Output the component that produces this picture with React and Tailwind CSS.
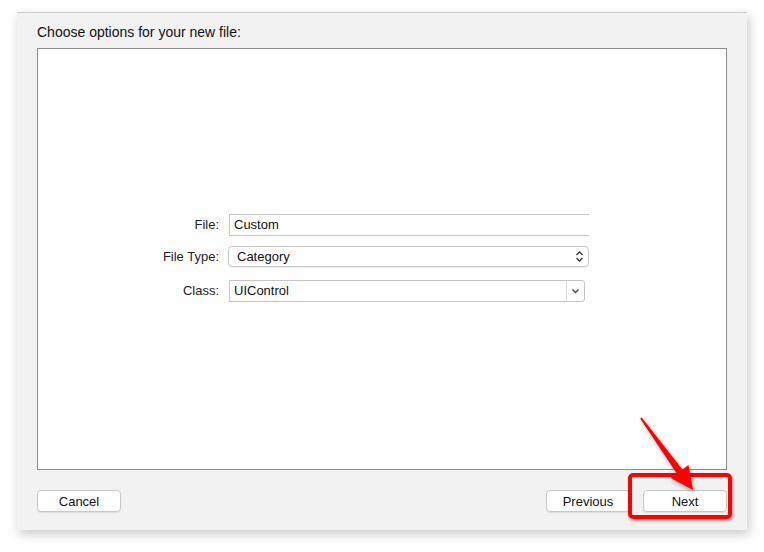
import React from "react";

function Field({ label, children, className }) {
  return (
    <div className={"flex items-center " + (className || "")}>
      <div className="w-[182px] pr-[1px] text-right text-[13px] text-[#222]">{label}</div>
      <div className="ml-[9px]">{children}</div>
    </div>
  );
}

function Button({ children, className }) {
  return (
    <button className={"h-[22px] w-[84px] rounded-[4px] border border-[#c8c8c8] bg-white text-[13px] leading-none text-[#111] shadow-[0_1px_1px_rgba(0,0,0,0.08)] " + (className || "")}>
      {children}
    </button>
  );
}

export default function App() {
  return (
    <div className="relative h-[552px] w-[764px] bg-white pl-[17px] pt-[12px] font-['Liberation_Sans',Arial,sans-serif]">
      <div className="flex h-[518px] w-[730px] flex-col border-t border-[#cfcfcf] bg-[#f2f2f2] px-[20px] shadow-[2px_4px_10px_rgba(0,0,0,0.22)]">
        <div className="flex h-[35px] items-center pt-[4px] text-[14px] text-[#111]">Choose options for your new file:</div>
        <div className="flex h-[422px] w-[690px] flex-col justify-center border border-[#8c8c8c] bg-white pb-[2px]">
          <Field label="File:">
            <div className="flex h-[22px] w-[360px] items-center border-y border-l border-[#c4c4c4] pl-[4px] text-[13px] text-[#111]">Custom</div>
          </Field>
          <Field label="File Type:" className="mt-[10px]">
            <div className="-ml-[1px] flex h-[21px] w-[361px] items-center justify-between rounded-[4px] border border-[#c8c8c8] pl-[8px] pr-[4px] text-[13px] text-[#111] shadow-[0_1px_1px_rgba(0,0,0,0.06)]">
              <span>Category</span>
              <svg width="9" height="13" viewBox="0 0 9 13" fill="none" stroke="#333" strokeWidth="1.3">
                <path d="M1.5 5 L4.5 2 L7.5 5" />
                <path d="M1.5 8 L4.5 11 L7.5 8" />
              </svg>
            </div>
          </Field>
          <Field label="Class:" className="mt-[13px]">
            <div className="flex h-[22px] w-[356px] items-center rounded-r-[3px] border border-[#c4c4c4] text-[13px] text-[#111]">
              <span className="flex-1 pl-[4px]">UIControl</span>
              <div className="flex h-full w-[18px] items-center justify-center border-l border-[#dcdcdc]">
                <svg width="9" height="6" viewBox="0 0 9 6" fill="none" stroke="#444" strokeWidth="1.3">
                  <path d="M1.5 1.5 L4.5 4.5 L7.5 1.5" />
                </svg>
              </div>
            </div>
          </Field>
        </div>
        <div className="mt-[20px] flex items-center">
          <Button>Cancel</Button>
          <div className="flex-1" />
          <Button className="w-[83px]">Previous</Button>
          <Button className="ml-[13px]">Next</Button>
        </div>
      </div>

      {/* red highlight annotation */}
      <div className="absolute left-[628px] top-[473px] h-[46px] w-[104px] rounded-[5px] border-[4px] border-[#ff0000] shadow-[1px_2px_3px_rgba(0,0,0,0.35)]" />
      <svg className="absolute left-0 top-0" width="764" height="552" style={{ filter: "drop-shadow(1px 2px 2px rgba(0,0,0,0.35))" }}>
        <polygon
          points="641.8,417.4 682.4,469.5 688.5,465.1 693,490 670.7,477.9 676.8,473.5 640.2,418.6"
          fill="#ff0000"
        />
      </svg>
    </div>
  );
}
